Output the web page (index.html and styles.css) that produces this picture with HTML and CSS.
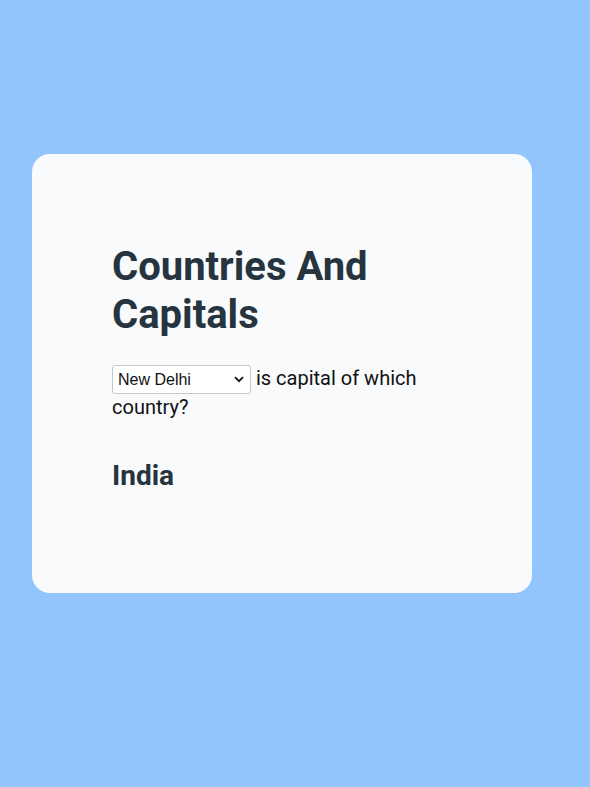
FILE: index.html
```html
<!DOCTYPE html>
<html lang="en">
<head>
<meta charset="utf-8">
<title>Countries And Capitals</title>
<link rel="stylesheet" href="styles.css">
</head>
<body>
  <main class="card">
    <h1 class="title">Countries And Capitals</h1>
    <p class="question">
      <select class="capital-select">
        <option>New Delhi</option>
        <option>Paris</option>
        <option>Tokyo</option>
      </select>
      is capital of which country?
    </p>
    <h2 class="answer">India</h2>
  </main>
</body>
</html>
```
FILE: styles.css
```css
html, body {
  margin: 0;
  padding: 0;
}
body {
  background: #93c5fd;
  font-family: Roboto, "Liberation Sans", sans-serif;
  min-height: 787px;
  padding: 154px 58px 0 32px;
  box-sizing: border-box;
}
.card {
  width: 500px;
  height: 439px;
  box-sizing: border-box;
  background: #f8fafc;
  border-radius: 18px;
  padding: 89px 80px 0 80px;
}
.title {
  margin: 0;
  font-size: 40px;
  line-height: 48px;
  font-weight: 700;
  color: #263440;
}
.question {
  margin: 26px 0 0 0;
  font-size: 20px;
  line-height: 26px;
  color: #111;
}
.capital-select {
  -webkit-appearance: none;
  appearance: none;
  width: 139px;
  height: 29px;
  font-family: "Liberation Sans", Arial, sans-serif;
  font-size: 16px;
  border: 1px solid #c6c8cc;
  border-radius: 3px;
  background-color: #fff;
  background-image: url("data:image/svg+xml,%3Csvg xmlns='http://www.w3.org/2000/svg' width='10' height='7' viewBox='0 0 10 7'%3E%3Cpath d='M1 1.2 L5 5.2 L9 1.2' fill='none' stroke='%23111' stroke-width='1.8'/%3E%3C/svg%3E");
  background-repeat: no-repeat;
  background-position: right 6px center;
  color: #111;
  padding: 0 20px 0 5px;
  vertical-align: baseline;
}
.answer {
  margin: 39px 0 0 0;
  font-size: 28px;
  line-height: 34px;
  font-weight: 700;
  color: #263440;
}
```
